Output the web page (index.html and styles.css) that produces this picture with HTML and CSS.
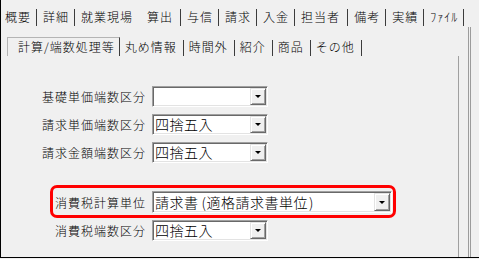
FILE: index.html
```html
<!DOCTYPE html>
<html lang="ja">
<head>
<meta charset="utf-8">
<title>算出</title>
<link rel="stylesheet" href="styles.css">
</head>
<body>
<div class="frame">
  <div class="tabs-top">
    <span class="tab first">概要</span>
    <span class="tab">詳細</span>
    <span class="tab before-sel">就業現場</span>
    <span class="tab sel">算出</span>
    <span class="tab">与信</span>
    <span class="tab">請求</span>
    <span class="tab">入金</span>
    <span class="tab wide-tab">担当者</span>
    <span class="tab">備考</span>
    <span class="tab">実績</span>
    <span class="tab">ﾌｧｲﾙ</span>
  </div>
  <div class="outer">
    <div class="itabs">
      <span class="itab isel">計算/端数処理等</span>
      <span class="itab">丸め情報</span>
      <span class="itab">時間外</span>
      <span class="itab">紹介</span>
      <span class="itab">商品</span>
      <span class="itab">その他</span>
    </div>
    <div class="page">
      <div class="row">
        <span class="label">基礎単価端数区分</span>
        <div class="combo"><span class="value"></span><span class="btn"><span class="tri"></span></span></div>
      </div>
      <div class="row">
        <span class="label">請求単価端数区分</span>
        <div class="combo"><span class="value">四捨五入</span><span class="btn"><span class="tri"></span></span></div>
      </div>
      <div class="row">
        <span class="label">請求金額端数区分</span>
        <div class="combo"><span class="value">四捨五入</span><span class="btn"><span class="tri"></span></span></div>
      </div>
      <div class="highlight">
        <span class="label hl-label">消費税計算単位</span>
        <div class="combo wide"><span class="value">請求書<span class="po">(</span>適格請求書単位<span class="pc">)</span></span><span class="btn"><span class="tri"></span></span></div>
      </div>
      <div class="row last">
        <span class="label">消費税端数区分</span>
        <div class="combo"><span class="value">四捨五入</span><span class="btn"><span class="tri"></span></span></div>
      </div>
    </div>
  </div>
</div>
</body>
</html>
```
FILE: styles.css
```css
html, body {
  margin: 0;
  padding: 0;
  background: #f0f0f0;
}
body {
  font-family: "Noto Sans CJK JP", "Noto Sans", sans-serif;
  font-weight: 300;
  color: #000;
}
.frame {
  width: 479px;
  height: 258px;
  box-sizing: border-box;
  border-left: 1px solid #000;
  border-bottom: 1px solid #000;
  overflow: hidden;
  background: #f0f0f0;
}
.tabs-top {
  display: flex;
  height: 27px;
  box-sizing: border-box;
  padding-top: 9px;
}
.tab {
  font-size: 12px;
  letter-spacing: 1px;
  height: 17px;
  line-height: 15px;
  padding: 0 5px 2px 6px;
  box-sizing: border-box;
  border-right: 1px solid #3c3c3c;
  white-space: nowrap;
}
.tab.first { padding-left: 4px; }
.tab.before-sel { border-right-color: transparent; }
.tab.sel { padding-left: 8px; padding-right: 7px; }
.tab.wide-tab { padding-right: 7px; }

.outer {
  width: 470px;
  height: 240px;
  box-sizing: border-box;
  border-right: 3px double #9c9c9c;
  padding-left: 6px;
  padding-top: 10px;
}
.itabs {
  display: flex;
  height: 19px;
}
.itab {
  font-size: 12px;
  letter-spacing: 1px;
  margin-top: 3px;
  height: 16px;
  line-height: 14px;
  padding: 0 6px 2px 5px;
  box-sizing: border-box;
  border-right: 1px solid #3c3c3c;
  white-space: nowrap;
}
.itab.isel {
  margin-top: 0;
  height: 19px;
  padding: 2px 4px 3px 10px;
  line-height: 14px;
  border-top: 1px solid #b4b4b4;
  border-left: 1px solid #b4b4b4;
}
.page {
  width: 452px;
  height: 220px;
  box-sizing: border-box;
  border-right: 1px solid #a0a0a0;
  padding-top: 30px;
}
.row {
  display: flex;
  align-items: center;
  gap: 6px;
  height: 21px;
  margin-bottom: 7px;
}
.label {
  width: 139px;
  flex: none;
  text-align: right;
  font-size: 12px;
  letter-spacing: 1px;
  white-space: nowrap;
}
.combo {
  position: relative;
  width: 116px;
  height: 21px;
  flex: none;
  box-sizing: border-box;
  background: #fff;
  border-top: 1px solid #a0a0a0;
  border-left: 1px solid #a0a0a0;
  border-right: 1px solid #fff;
  border-bottom: 1px solid #fff;
  box-shadow: inset 1px 1px 0 #696969, inset -1px -1px 0 #e3e3e3;
  display: flex;
  align-items: center;
}
.value {
  flex: 1;
  font-size: 14px;
  letter-spacing: 0.5px;
  padding-left: 2px;
  white-space: nowrap;
  line-height: 17px;
}
.po { padding-left: 3px; }
.pc { padding-left: 1px; }
.btn {
  flex: none;
  width: 16px;
  height: 17px;
  margin-right: 1px;
  box-sizing: border-box;
  background: #f0f0f0;
  border-top: 1px solid #e3e3e3;
  border-left: 1px solid #e3e3e3;
  border-right: 1px solid #696969;
  border-bottom: 1px solid #696969;
  box-shadow: inset 1px 1px 0 #fff, inset -1px -1px 0 #a0a0a0;
  display: flex;
  align-items: center;
  justify-content: center;
}
.tri {
  width: 0;
  height: 0;
  border-left: 3px solid transparent;
  border-right: 3px solid transparent;
  border-top: 3px solid #000;
}
.highlight {
  display: flex;
  align-items: center;
  gap: 6px;
  margin-left: 43px;
  margin-top: 22px;
  width: 346px;
  height: 33px;
  box-sizing: border-box;
  border: 3px solid #ff0000;
  border-radius: 7px;
  padding: 1px 0 0 0;
}
.label.hl-label { width: 93px; }
.combo.wide {
  width: 240px;
  height: 22px;
}
.combo.wide .btn { height: 18px; }
.row.last { margin-top: 2px; }
```
